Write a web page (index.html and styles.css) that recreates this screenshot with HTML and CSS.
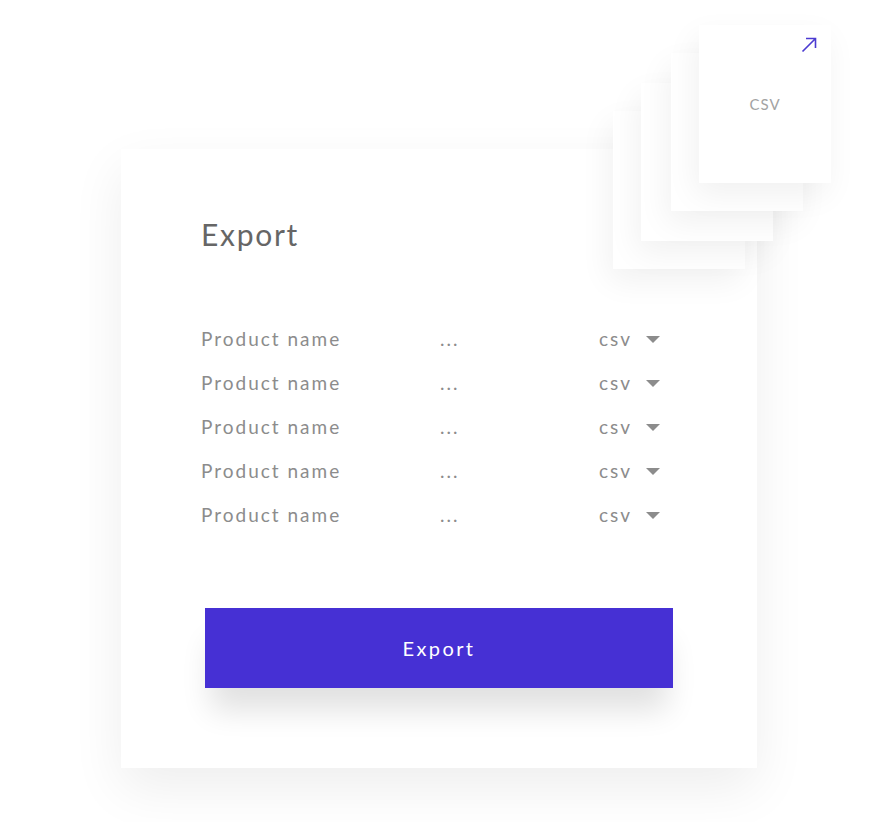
FILE: index.html
```html
<!DOCTYPE html>
<html lang="en">
<head>
  <meta charset="UTF-8" />
  <meta name="viewport" content="width=device-width, initial-scale=1.0" />
  <title>Export</title>
  <link rel="stylesheet" href="styles.css">
</head>
<body>
  <div class="stage">
    <div class="card">
      <div class="sheets">
        <div class="sheet sheet-4"></div>
        <div class="sheet sheet-3"></div>
        <div class="sheet sheet-2"></div>
        <div class="sheet sheet-1">
          <svg class="sheet-arrow" width="16" height="16" viewBox="0 0 16 16">
            <path d="M1.5 14.5 L14.5 1.5 M5 1.5 H14.5 V11" fill="none" stroke="#4b3bd1" stroke-width="1.6" />
          </svg>
          <span class="sheet-label">CSV</span>
        </div>
      </div>

      <h1>Export</h1>

      <ul class="rows">
        <li><span>Product name</span><span>...</span><span class="format">csv <i class="caret"></i></span></li>
        <li><span>Product name</span><span>...</span><span class="format">csv <i class="caret"></i></span></li>
        <li><span>Product name</span><span>...</span><span class="format">csv <i class="caret"></i></span></li>
        <li><span>Product name</span><span>...</span><span class="format">csv <i class="caret"></i></span></li>
        <li><span>Product name</span><span>...</span><span class="format">csv <i class="caret"></i></span></li>
      </ul>

      <button class="export-btn">Export</button>
    </div>
  </div>
</body>
</html>
```

FILE: styles.css
```css
body {
  margin: 0;
  padding: 0;
  background: #ffffff;
  font-family: 'Lato', 'Open Sans', sans-serif;
}

.stage {
  padding: 149px 0 54px 121px;
}

.card {
  position: relative;
  box-sizing: border-box;
  width: 636px;
  height: 619px;
  padding: 67px 84px 0 80px;
  background: #ffffff;
  box-shadow: 0 20px 50px rgba(0, 0, 0, 0.07);
}

/* stacked file previews */
.sheets {
  position: absolute;
  top: 0;
  left: 0;
}

.sheet {
  position: absolute;
  width: 132px;
  height: 158px;
  background: #ffffff;
  box-shadow: -4px 12px 30px rgba(0, 0, 0, 0.06);
}

.sheet-4 { left: 492px; top: -38px; }
.sheet-3 { left: 520px; top: -66px; }
.sheet-2 { left: 550px; top: -96px; }
.sheet-1 { left: 578px; top: -124px; }

.sheet-arrow {
  position: absolute;
  top: 12px;
  right: 14px;
}

.sheet-label {
  position: absolute;
  top: 70px;
  left: 0;
  right: 0;
  text-align: center;
  font-size: 15px;
  color: #a3a3a3;
  letter-spacing: 1px;
}

h1 {
  margin: 0;
  font-size: 30px;
  line-height: 36px;
  font-weight: 400;
  color: #666666;
  letter-spacing: 1.7px;
}

.rows {
  list-style: none;
  margin: 65px 0 0;
  padding: 0;
}

.rows li {
  display: grid;
  grid-template-columns: 239px 159px auto;
  height: 44px;
  line-height: 44px;
  font-size: 19px;
  color: #8c8c8c;
  letter-spacing: 2px;
}

.format {
  display: flex;
  align-items: center;
  gap: 14px;
}

.caret {
  width: 0;
  height: 0;
  border-left: 7.5px solid transparent;
  border-right: 7.5px solid transparent;
  border-top: 7px solid #8c8c8c;
}

.export-btn {
  display: block;
  width: 468px;
  height: 80px;
  margin: 71px 0 0 4px;
  border: none;
  background: #4630d4;
  color: #ffffff;
  font-family: inherit;
  font-size: 20px;
  letter-spacing: 2.4px;
  box-shadow: 0 28px 30px -6px rgba(0, 0, 0, 0.12);
  cursor: pointer;
}
```
